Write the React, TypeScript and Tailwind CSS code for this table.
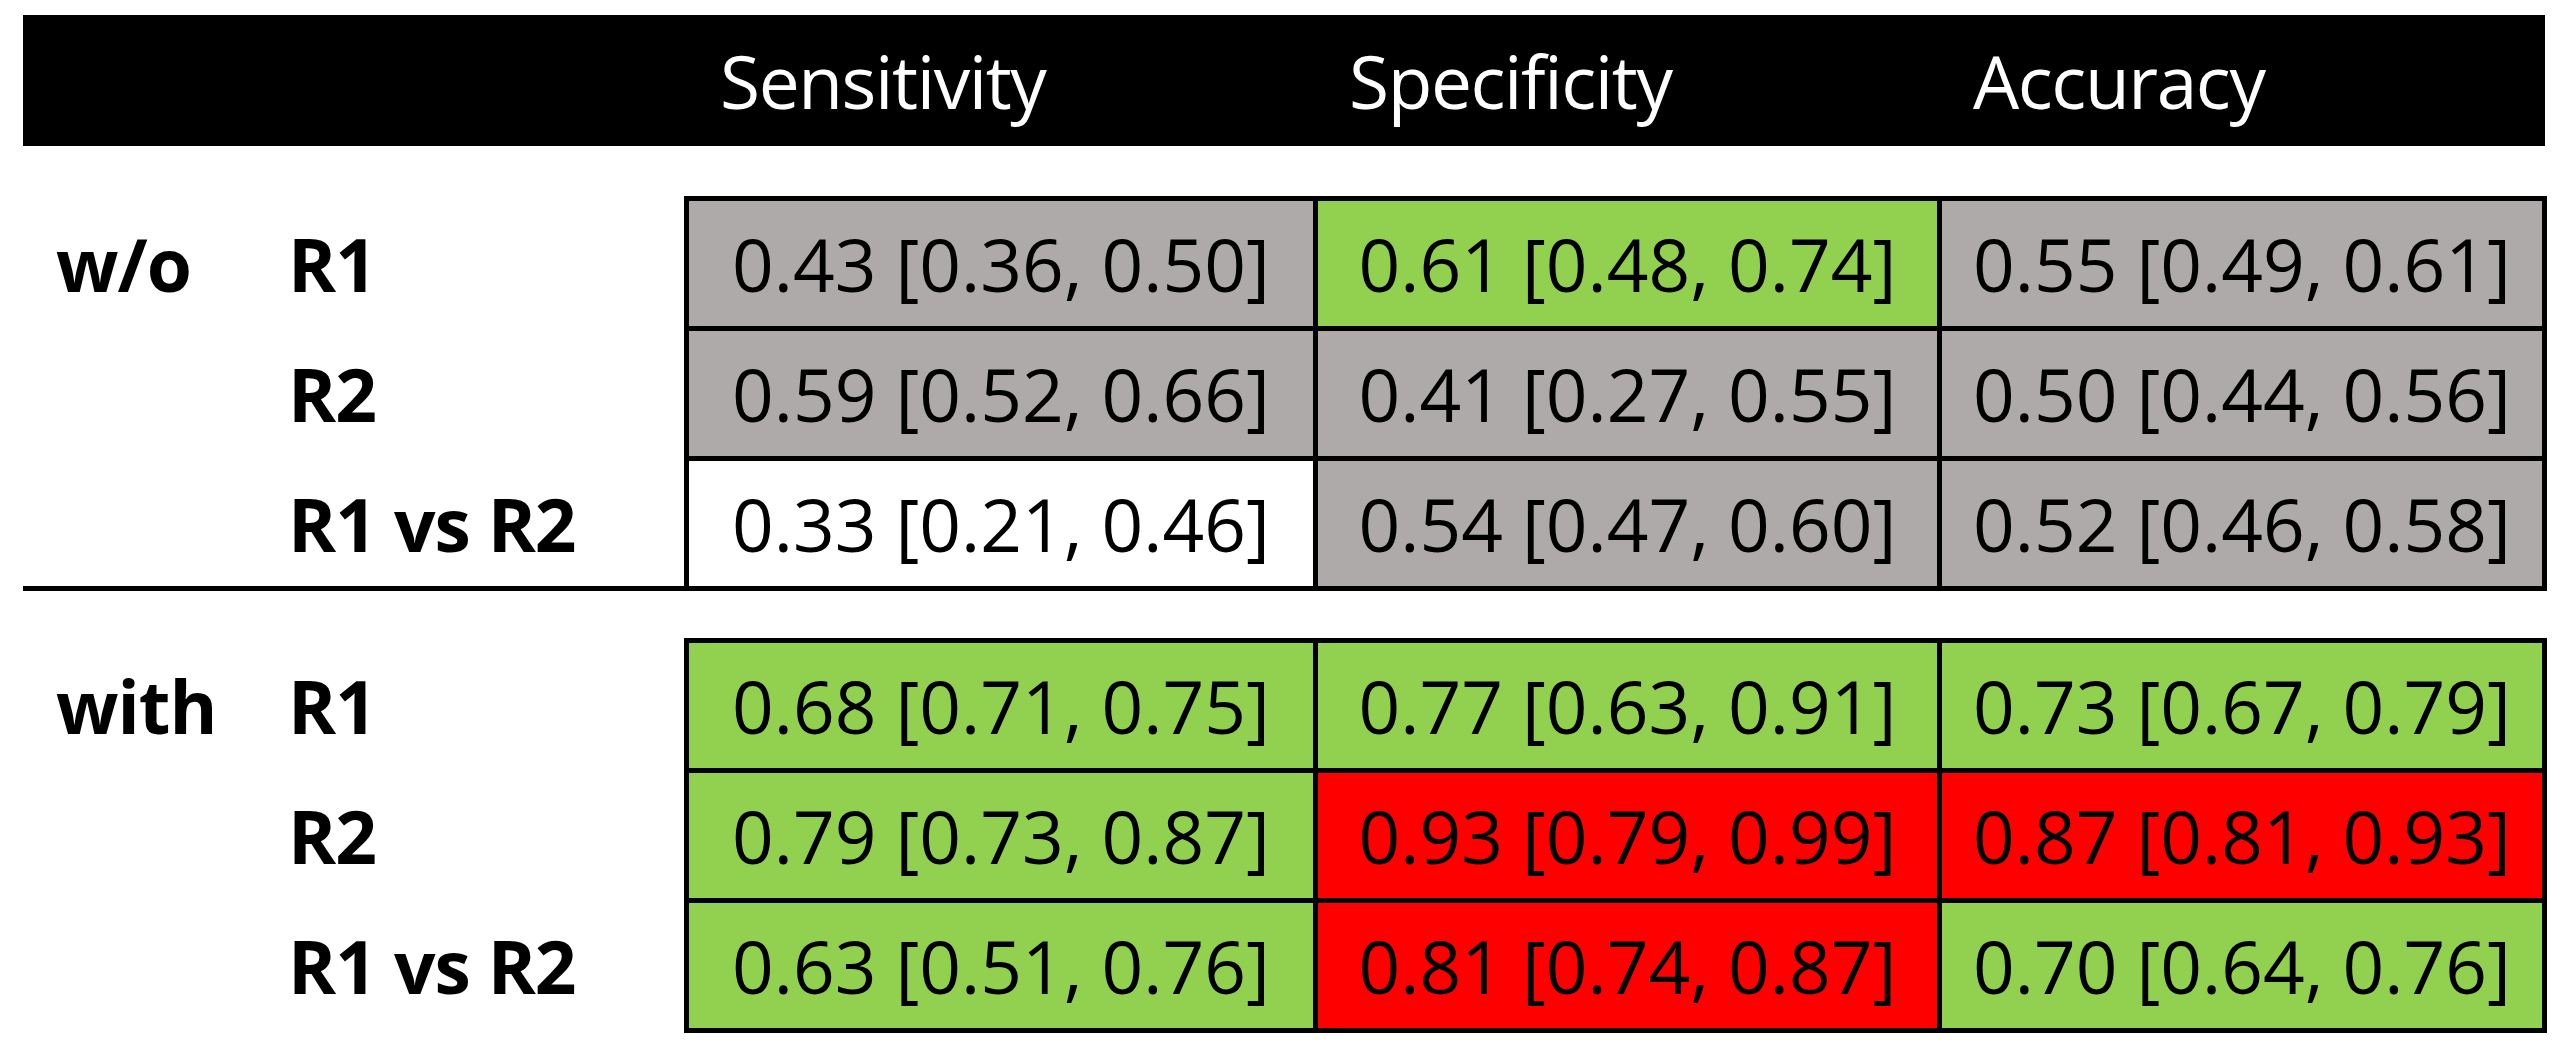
import React from "react";

type Tone = "grey" | "green" | "red" | "white";

const toneClass: Record<Tone, string> = {
  grey: "bg-[#aeaaaa]",
  green: "bg-[#92d050]",
  red: "bg-[#ff0000]",
  white: "bg-white",
};

type Row = { label: string; cells: [string, Tone][] };

const sections: { name: string; rule: boolean; rows: Row[] }[] = [
  {
    name: "w/o",
    rule: true,
    rows: [
      {
        label: "R1",
        cells: [
          ["0.43 [0.36, 0.50]", "grey"],
          ["0.61 [0.48, 0.74]", "green"],
          ["0.55 [0.49, 0.61]", "grey"],
        ],
      },
      {
        label: "R2",
        cells: [
          ["0.59 [0.52, 0.66]", "grey"],
          ["0.41 [0.27, 0.55]", "grey"],
          ["0.50 [0.44, 0.56]", "grey"],
        ],
      },
      {
        label: "R1 vs R2",
        cells: [
          ["0.33 [0.21, 0.46]", "white"],
          ["0.54 [0.47, 0.60]", "grey"],
          ["0.52 [0.46, 0.58]", "grey"],
        ],
      },
    ],
  },
  {
    name: "with",
    rule: false,
    rows: [
      {
        label: "R1",
        cells: [
          ["0.68 [0.71, 0.75]", "green"],
          ["0.77 [0.63, 0.91]", "green"],
          ["0.73 [0.67, 0.79]", "green"],
        ],
      },
      {
        label: "R2",
        cells: [
          ["0.79 [0.73, 0.87]", "green"],
          ["0.93 [0.79, 0.99]", "red"],
          ["0.87 [0.81, 0.93]", "red"],
        ],
      },
      {
        label: "R1 vs R2",
        cells: [
          ["0.63 [0.51, 0.76]", "green"],
          ["0.81 [0.74, 0.87]", "red"],
          ["0.70 [0.64, 0.76]", "green"],
        ],
      },
    ],
  },
];

function Section({ name, rule, rows }: { name: string; rule: boolean; rows: Row[] }) {
  return (
    <div className="flex">
      <div
        className={
          "w-[661px] h-[395px] flex flex-col pt-[5px] gap-[5px] " +
          (rule ? "border-b-[5px] border-black" : "")
        }
      >
        {rows.map((r, i) => (
          <div key={i} className="h-[125px] flex items-center pl-[33px] font-bold text-black tracking-[-1px]">
            <div className="w-[232px] leading-none">{i === 0 ? name : ""}</div>
            <div className="leading-none whitespace-nowrap">{r.label}</div>
          </div>
        ))}
      </div>
      <div className="bg-black p-[5px] grid grid-cols-[624px_619px_600px] grid-rows-[125px_125px_125px] gap-[5px]">
        {rows.map((r, i) =>
          r.cells.map(([text, tone], j) => (
            <div
              key={i + "-" + j}
              className={
                "flex items-center justify-center text-black leading-none whitespace-nowrap " +
                toneClass[tone]
              }
            >
              {text}
            </div>
          ))
        )}
      </div>
    </div>
  );
}

export default function App() {
  return (
    <div className="w-[2565px] h-[1054px] bg-white font-['Open_Sans',sans-serif] text-[73px] pl-[23px] pt-[15px] overflow-hidden">
      <div className="w-[2522px] h-[131px] bg-black text-white flex items-center leading-none tracking-[-1.4px]">
        <div className="w-[697px]" />
        <div className="w-[629px]">Sensitivity</div>
        <div className="w-[624px]">Specificity</div>
        <div>Accuracy</div>
      </div>
      <div className="mt-[50px]">
        <Section {...sections[0]} />
      </div>
      <div className="mt-[47px]">
        <Section {...sections[1]} />
      </div>
    </div>
  );
}
